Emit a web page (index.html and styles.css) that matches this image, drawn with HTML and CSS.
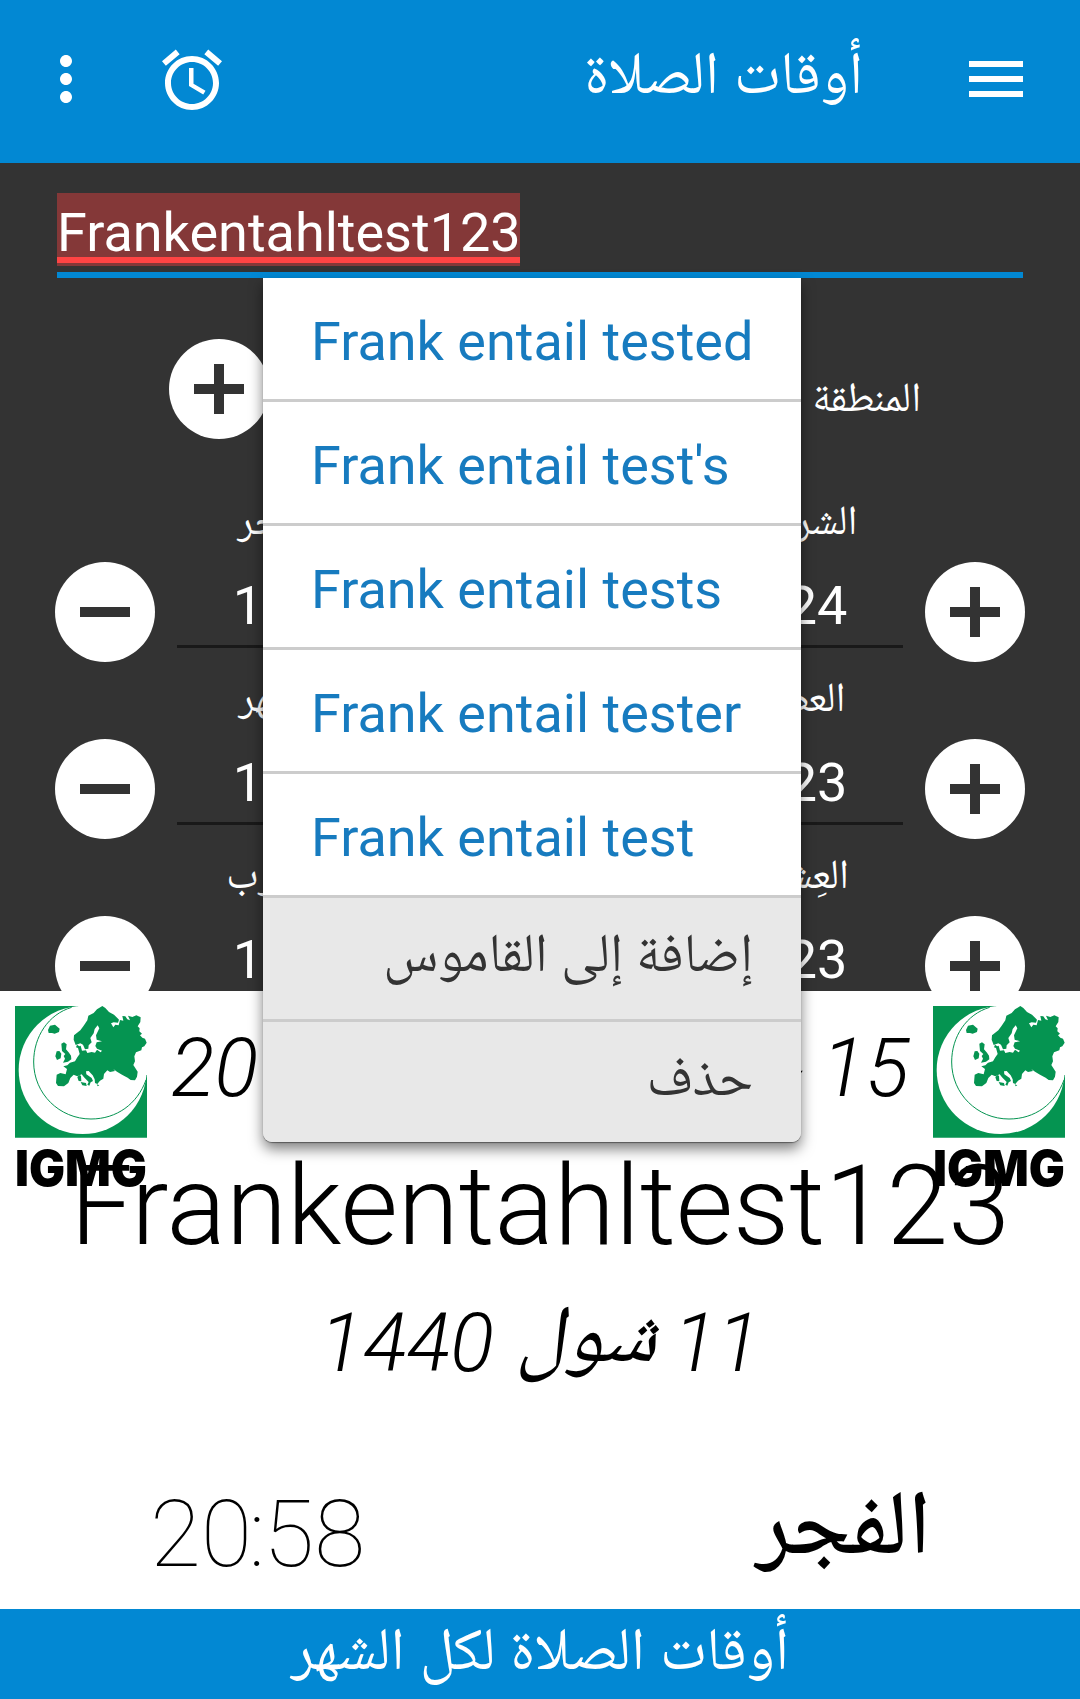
FILE: index.html
```html
<!DOCTYPE html>
<html lang="ar" dir="rtl">
<head>
<meta charset="utf-8">
<title>أوقات الصلاة</title>
<link rel="stylesheet" href="styles.css">
</head>
<body>
<svg class="defs" width="0" height="0" aria-hidden="true">
  <symbol id="plus" viewBox="0 0 100 100"><circle cx="50" cy="50" r="50" fill="#fff"/><path d="M25 45h20V25h10v20h20v10H55v20H45V55H25z" fill="#333"/></symbol>
  <symbol id="minus" viewBox="0 0 100 100"><circle cx="50" cy="50" r="50" fill="#fff"/><path d="M25 45h50v10H25z" fill="#333"/></symbol>
  <symbol id="emblem" viewBox="45 78 396 396">
    <path d="M45 78h396v395H45z" fill="#059451"/>
    <circle cx="248" cy="270" r="192" fill="#fff"/>
    <path d="M234 78h207v207l-100 0z" fill="#fff"/>
    <path d="M215 82C145 103 101 170 101 246C101 341 178 417 273 417C350 417 412 372 438 300" fill="none" stroke="#059451" stroke-width="3"/>
    <g fill="#059451">
      <path d="M307 78L316 84 327 96 342 104 357 119 354 128 341 127 333 130 340 142 346 134 356 136 360 120 370 122 367 108 376 109 382 118 390 121 384 107 397 111 409 106 422 112 421 126 413 139 419 145 418 154 426 161 420 166 427 173 435 176 440 188 433 199 426 202 424 211 408 217 403 229 405 244 400 255 413 275 411 290 405 301 392 300 383 293 366 284 351 275 340 267 345 273 330 276 322 271 312 282 310 296 300 302 292 312 285 309 284 298 278 286 266 273 258 274 259 283 275 294 279 303 272 307 268 317 262 314 266 306 252 292 245 283 232 289 221 284 211 294 205 309 192 319 174 318 168 309 170 284 181 279 197 283 201 267 190 259 202 256 210 248 225 244 232 232 239 222 234 204 228 202 231 194 238 199 242 197 246 212 258 211 262 219 275 216 285 218 291 209 302 217 306 212 291 206 286 198 290 187 306 184 290 179 288 166 298 145 293 136 284 147 281 160 271 174 275 187 266 196 265 206 255 208 249 194 241 190 227 195 221 179 222 166 241 151 251 137 262 121 265 107 281 99 291 88z"/>
      <path d="M144 150L150 137 165 134 179 146 177 156 164 161 156 159 146 159z"/>
      <path d="M184 191L192 187 200 193 198 208 207 218 213 227 214 238 204 245 189 248 195 236 191 228 196 222 186 213zM170 214L178 213 184 221 182 235 171 240 166 229z"/>
      <path d="M242 306L258 309 260 318 247 316zM237 285L243 287 244 304 236 303 232 292z"/>
      <path d="M290 313L298 316 293 319z"/>
    </g>
  </symbol>
</svg>

<header class="appbar">
  <svg class="icon" viewBox="0 0 24 24"><path d="M3 18h18v-2H3v2zm0-5h18v-2H3v2zm0-7v2h18V6H3z"/></svg>
  <h1 class="appbar-title">أوقات الصلاة</h1>
  <svg class="icon alarm" viewBox="0 0 24 24"><path d="M22 5.72l-4.6-3.86-1.29 1.53 4.6 3.86L22 5.72zM7.88 3.39L6.6 1.86 2 5.71l1.29 1.53 4.59-3.85zM12.5 8H11v6l4.75 2.85.75-1.23-4-2.37V8zM12 4c-4.97 0-9 4.03-9 9s4.02 9 9 9c4.97 0 9-4.03 9-9s-4.03-9-9-9zm0 16c-3.87 0-7-3.13-7-7s3.13-7 7-7 7 3.13 7 7-3.13 7-7 7z"/></svg>
  <svg class="icon" viewBox="0 0 24 24"><path d="M12 8c1.1 0 2-.9 2-2s-.9-2-2-2-2 .9-2 2 .9 2 2 2zm0 2c-1.1 0-2 .9-2 2s.9 2 2 2 2-.9 2-2-.9-2-2-2zm0 6c-1.1 0-2 .9-2 2s.9 2 2 2 2-.9 2-2-.9-2-2-2z"/></svg>
</header>

<main class="page">
  <section class="settings">
    <div class="name-field" dir="ltr"><span class="name-value">Frankentahltest123</span></div>
    <div class="region">
      <span class="label">المنطقة</span>
      <svg class="round"><use href="#plus"/></svg>
    </div>
    <div class="adjust">
      <svg class="round"><use href="#plus"/></svg>
      <div class="pair">
        <div class="cell"><span class="label">الشروق</span><span class="value">24</span></div>
        <div class="cell"><span class="label">الفجر</span><span class="value">19</span></div>
      </div>
      <svg class="round"><use href="#minus"/></svg>
    </div>
    <div class="adjust">
      <svg class="round"><use href="#plus"/></svg>
      <div class="pair">
        <div class="cell"><span class="label">العصر</span><span class="value">23</span></div>
        <div class="cell"><span class="label">الظهر</span><span class="value">19</span></div>
      </div>
      <svg class="round"><use href="#minus"/></svg>
    </div>
    <div class="adjust">
      <svg class="round"><use href="#plus"/></svg>
      <div class="pair">
        <div class="cell"><span class="label">العِشاء</span><span class="value">23</span></div>
        <div class="cell"><span class="label">المغرب</span><span class="value">19</span></div>
      </div>
      <svg class="round"><use href="#minus"/></svg>
    </div>
  </section>

  <section class="display">
    <div class="top">
      <div class="logo"><svg class="emblem"><use href="#emblem"/></svg><svg class="wordmark" viewBox="0 0 132 38"><text x="0" y="37" textLength="132" lengthAdjust="spacingAndGlyphs">IGMG</text></svg></div>
      <div class="date gregorian"><span>15</span><span class="month-name">حزيران/يونيو</span><span>2019</span></div>
      <div class="logo"><svg class="emblem"><use href="#emblem"/></svg><svg class="wordmark" viewBox="0 0 132 38"><text x="0" y="37" textLength="132" lengthAdjust="spacingAndGlyphs">IGMG</text></svg></div>
    </div>
    <h2 class="place">Frankentahltest123</h2>
    <div class="date hijri"><span>11</span><span class="month-name">شول</span><span>1440</span></div>
    <div class="prayer"><span class="prayer-name">الفجر</span><span class="prayer-time">20<span class="colon">:</span>58</span></div>
  </section>

  <ul class="popup">
    <li dir="ltr">Frank entail tested</li>
    <li dir="ltr">Frank entail test's</li>
    <li dir="ltr">Frank entail tests</li>
    <li dir="ltr">Frank entail tester</li>
    <li dir="ltr">Frank entail test</li>
    <li class="action">إضافة إلى القاموس</li>
    <li class="action">حذف</li>
  </ul>
</main>

<footer class="month"><span>أوقات الصلاة لكل الشهر</span></footer>
</body>
</html>
```
FILE: styles.css
```css
* { box-sizing: border-box; }
html { height: 1699px; overflow: hidden; }
body {
  margin: 0;
  width: 1080px;
  height: 1699px;
  overflow: hidden;
  background: #fff;
  font-family: Roboto, "Noto Naskh Arabic", "Noto Naskh Arabic UI", "Droid Arabic Naskh", Amiri, "Noto Sans Arabic", "DejaVu Sans", sans-serif;
  color: #fff;
}
h1, h2, ul { margin: 0; padding: 0; font-weight: 400; }
svg { display: block; flex: none; }
.defs { display: none; }

.appbar {
  display: flex;
  align-items: center;
  height: 163px;
  padding: 0 48px 5px 30px;
  background: #0288d3;
}
.icon { width: 72px; height: 72px; fill: #fff; }
.appbar-title {
  margin-right: 97px;
  margin-bottom: 12px;
  font-size: 60px;
  line-height: 72px;
  white-space: nowrap;
}
.alarm { margin-top: 2px; margin-right: auto; margin-left: 54px; }

.page { position: relative; }
.settings {
  height: 828px;
  padding-top: 30px;
  overflow: hidden;
  background: #333;
}
.name-field {
  height: 85px;
  margin: 0 57px;
  border-bottom: 6px solid #0288d3;
}
.name-value {
  display: block;
  width: 463px;
  height: 73px;
  background: linear-gradient(#ff4444, #ff4444) 0 64px / 100% 6px no-repeat #843838;
  font-size: 54px;
  line-height: 79px;
  white-space: nowrap;
}
.round { width: 100px; height: 100px; }
.region {
  display: flex;
  justify-content: space-between;
  height: 100px;
  margin: 61px 159px 53px 169px;
}
.region .label { line-height: 116px; }
.label { font-size: 41.4px; white-space: nowrap; }
.adjust {
  display: flex;
  justify-content: space-between;
  height: 177px;
  padding: 0 55px;
}
.adjust .round { margin-top: 70px; }
.pair {
  display: flex;
  justify-content: space-between;
  width: 726px;
  height: 156px;
  border-bottom: 3px solid #191919;
}
.cell {
  display: flex;
  flex-direction: column;
  align-items: center;
  width: 200px;
}
.cell .label { height: 58px; line-height: 57px; }
.value { font-size: 54px; line-height: 114px; }
.cell:first-child .value { margin-left: 28px; }
.cell:last-child .value { margin-right: 28px; }

.display { height: 618px; padding-top: 15px; color: #000; }
.top {
  display: flex;
  justify-content: space-between;
  height: 135px;
  padding: 0 15px;
}
.logo { width: 132px; }
.emblem { width: 132px; height: 132px; }
.wordmark { width: 132px; height: 38px; margin-top: 11px; }
.wordmark text { font: 900 50px Inter, sans-serif; fill: #000; direction: ltr; text-anchor: start; }
.date {
  display: flex;
  font-size: 81px;
  font-style: italic;
  font-weight: 300;
  line-height: 125px;
  white-space: nowrap;
}
.gregorian { width: 738px; }
.gregorian .month-name { margin-right: 20px; margin-left: auto; }
.month-name { margin-top: -10px; }
.place {
  direction: ltr;
  font-size: 111px;
  font-weight: 300;
  line-height: 130px;
  text-align: center;
}
.hijri {
  justify-content: center;
  height: 100px;
  margin-top: 22px;
  line-height: 101px;
}
.hijri .month-name { margin-right: 17px; margin-left: 23px; }
.prayer {
  display: flex;
  justify-content: space-between;
  height: 108px;
  margin: 87px 149px 0 150px;
  line-height: 109px;
}
.prayer-name { margin-top: -12px; font-size: 91px; font-weight: 500; }
.prayer-time { font-size: 93px; font-weight: 100; }
.colon { margin: 0 -2px 0 -3px; }

.popup {
  position: absolute;
  left: 263px;
  top: 115px;
  width: 538px;
  height: 864px;
  overflow: hidden;
  border-radius: 0 0 9px 9px;
  box-shadow: 0 1px 1px rgba(0,0,0,.4), 0 7px 14px rgba(0,0,0,.5);
  background: #e8e8e8;
  list-style: none;
}
.popup li {
  height: 124px;
  padding: 0 48px;
  border-bottom: 3px solid #ccc;
  background: #fff;
  color: #177bbf;
  font-size: 54px;
  line-height: 127px;
  white-space: nowrap;
}
.popup .action { background: #e8e8e8; color: #333; font-size: 54.3px; line-height: 109px; }
.popup li:last-child { border-bottom: 0; }

.month {
  height: 90px;
  background: #0288d3;
  font-size: 60px;
  line-height: 80px;
  text-align: center;
  white-space: nowrap;
}
```
